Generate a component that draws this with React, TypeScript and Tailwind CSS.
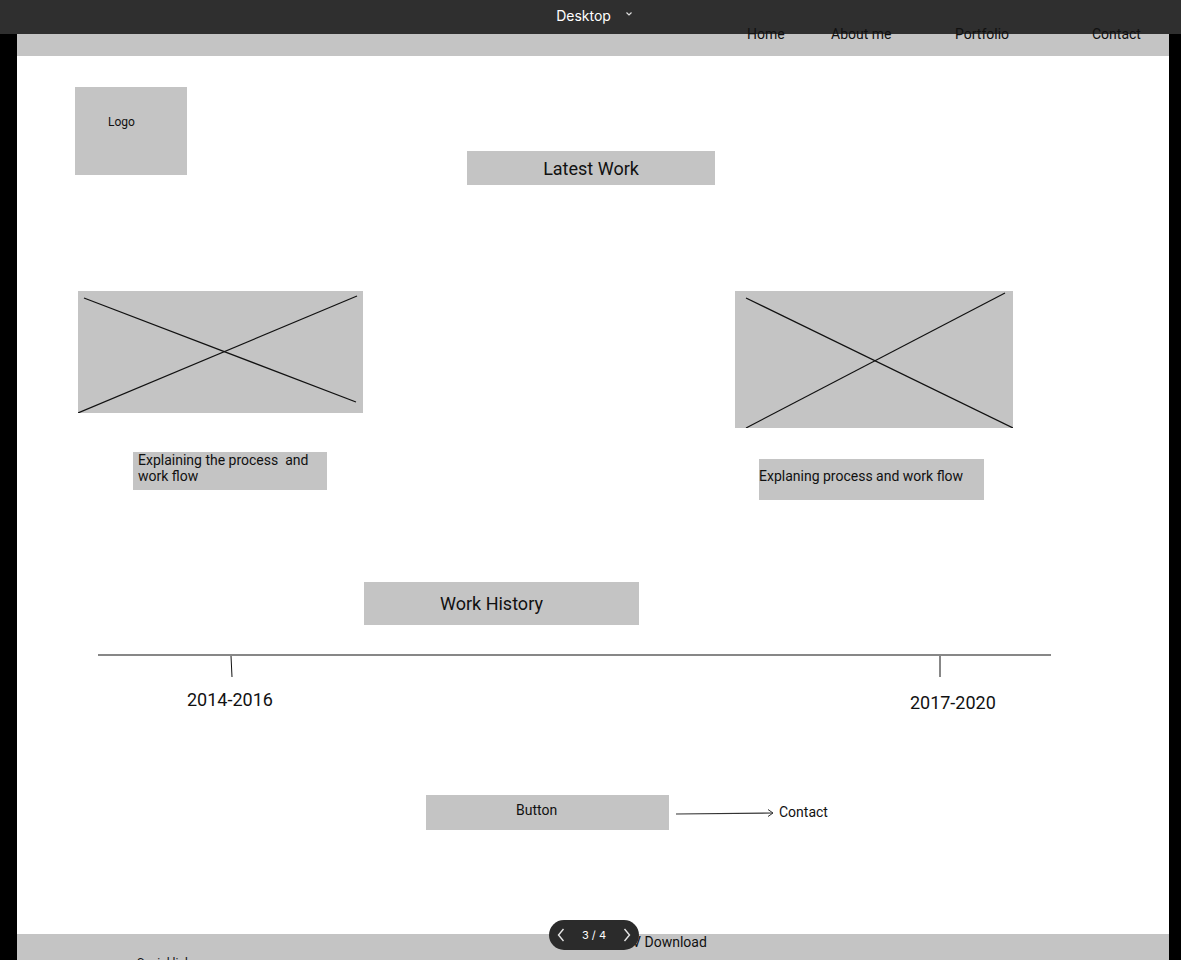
const gray = 'bg-[#c4c4c4]'

const Cross = ({ w, h, lines }: { w: number; h: number; lines: number[][] }) => (
  <svg width={w} height={h} className="absolute inset-0">
    {lines.map(([x1, y1, x2, y2], i) => (
      <line key={i} x1={x1} y1={y1} x2={x2} y2={y2} stroke="#111" strokeWidth="1.2" />
    ))}
  </svg>
)

const App = () => {
  return (
    <div className="relative h-[960px] w-full overflow-hidden bg-black font-['Roboto',sans-serif] text-[#111]">
      {/* prototype chrome */}
      <div className="absolute left-0 right-0 top-0 z-10 flex h-[34px] items-center justify-center bg-[#2f2f2f] font-['Inter',sans-serif]">
        <span className="ml-[8px] mt-[-4px] text-[14px] text-white">Desktop</span>
        <svg width="8" height="6" viewBox="0 0 8 6" className="ml-[14px] mt-[-6px]">
          <path d="M1.5 1.5 L4 4 L6.5 1.5" stroke="#ddd" strokeWidth="1.2" fill="none" />
        </svg>
      </div>

      <div className="relative ml-[17px] flex h-[960px] w-[1152px] flex-col bg-white">
        {/* header */}
        <header className={`${gray} h-[56px] shrink-0`}>
          <nav className="relative z-20 flex pl-[730px] pt-[26px] text-[14px] leading-4">
            <span className="w-[84px]">Home</span>
            <span className="w-[124px]">About me</span>
            <span className="w-[137px]">Portfolio</span>
            <span>Contact</span>
          </nav>
        </header>

        {/* logo + heading */}
        <div className="flex shrink-0 items-start">
          <div className={`${gray} ml-[58px] mt-[31px] h-[88px] w-[112px] pl-[33px] pt-[27px] text-[12px] leading-4`}>
            Logo
          </div>
          <div className={`${gray} ml-[280px] mt-[95px] flex h-[34px] w-[248px] items-center justify-center text-[18px]`}>
            Latest Work
          </div>
        </div>

        {/* latest work */}
        <div className="mt-[106px] flex shrink-0 items-start">
          <div className="ml-[61px] flex flex-col">
            <div className={`${gray} relative h-[122px] w-[285px]`}>
              <Cross w={285} h={122} lines={[[6, 7, 278, 111], [0, 122, 279, 5]]} />
            </div>
            <div className={`${gray} ml-[55px] mt-[39px] h-[38px] w-[194px] pl-[5px] text-[14px] leading-4`}>
              Explaining the process&nbsp; and work flow
            </div>
          </div>
          <div className="ml-[372px] flex flex-col">
            <div className={`${gray} relative h-[137px] w-[278px]`}>
              <Cross w={278} h={137} lines={[[11, 7, 278, 137], [11, 137, 270, 2]]} />
            </div>
            <div className={`${gray} ml-[24px] mt-[31px] h-[41px] w-[225px] pt-[9px] text-[14px] leading-4`}>
              Explaning process and work flow
            </div>
          </div>
        </div>

        {/* work history */}
        <div className={`${gray} ml-[347px] mt-[82px] flex h-[43px] w-[275px] shrink-0 items-center pl-[76px] text-[18px]`}>
          Work History
        </div>

        <div className="ml-[81px] mt-[29px] flex shrink-0 flex-col">
          <svg width="953" height="24">
            <line x1="0" y1="1" x2="953" y2="1" stroke="#111" strokeWidth="1.2" />
            <line x1="133" y1="2" x2="134" y2="23" stroke="#111" strokeWidth="1" />
            <line x1="842" y1="2" x2="842" y2="23" stroke="#111" strokeWidth="1" />
          </svg>
          <div className="flex h-[37px] items-start text-[18px] leading-6">
            <span className="ml-[89px] mt-[10px]">2014-2016</span>
            <span className="ml-[637px] mt-[13px]">2017-2020</span>
          </div>
        </div>

        {/* button + contact */}
        <div className="mt-[80px] flex shrink-0 items-start">
          <div className={`${gray} ml-[409px] h-[35px] w-[243px] pl-[90px] pt-[5px] text-[14px] leading-5`}>
            Button
          </div>
          <svg width="100" height="10" className="ml-[7px] mt-[13px]">
            <path d="M0 6 L97 5" stroke="#333" strokeWidth="1.2" fill="none" />
            <path d="M92 1.5 L97 5 L92 8.5" stroke="#333" strokeWidth="1" fill="none" />
          </svg>
          <span className="ml-[3px] mt-[7px] text-[14px] leading-5">Contact</span>
        </div>

        {/* footer */}
        <footer className={`${gray} mt-[104px] flex-1`}>
          <div className="pl-[606px] text-[14px] leading-4">CV Download</div>
          <div className="mt-[5px] pl-[120px] text-[12px] leading-4">Social links</div>
        </footer>
      </div>

      {/* pager */}
      <div className="absolute left-[549px] top-[920px] z-10 flex h-[30px] w-[90px] items-center justify-between rounded-full bg-[#2b2b2b] px-[8px] font-['Inter',sans-serif]">
        <svg width="8" height="14" viewBox="0 0 8 14">
          <path d="M6.5 1 L1.5 7 L6.5 13" stroke="#e5e5e5" strokeWidth="1.4" fill="none" />
        </svg>
        <span className="text-[11px] text-white">3 / 4</span>
        <svg width="8" height="14" viewBox="0 0 8 14">
          <path d="M1.5 1 L6.5 7 L1.5 13" stroke="#e5e5e5" strokeWidth="1.4" fill="none" />
        </svg>
      </div>
    </div>
  )
}

export default App
